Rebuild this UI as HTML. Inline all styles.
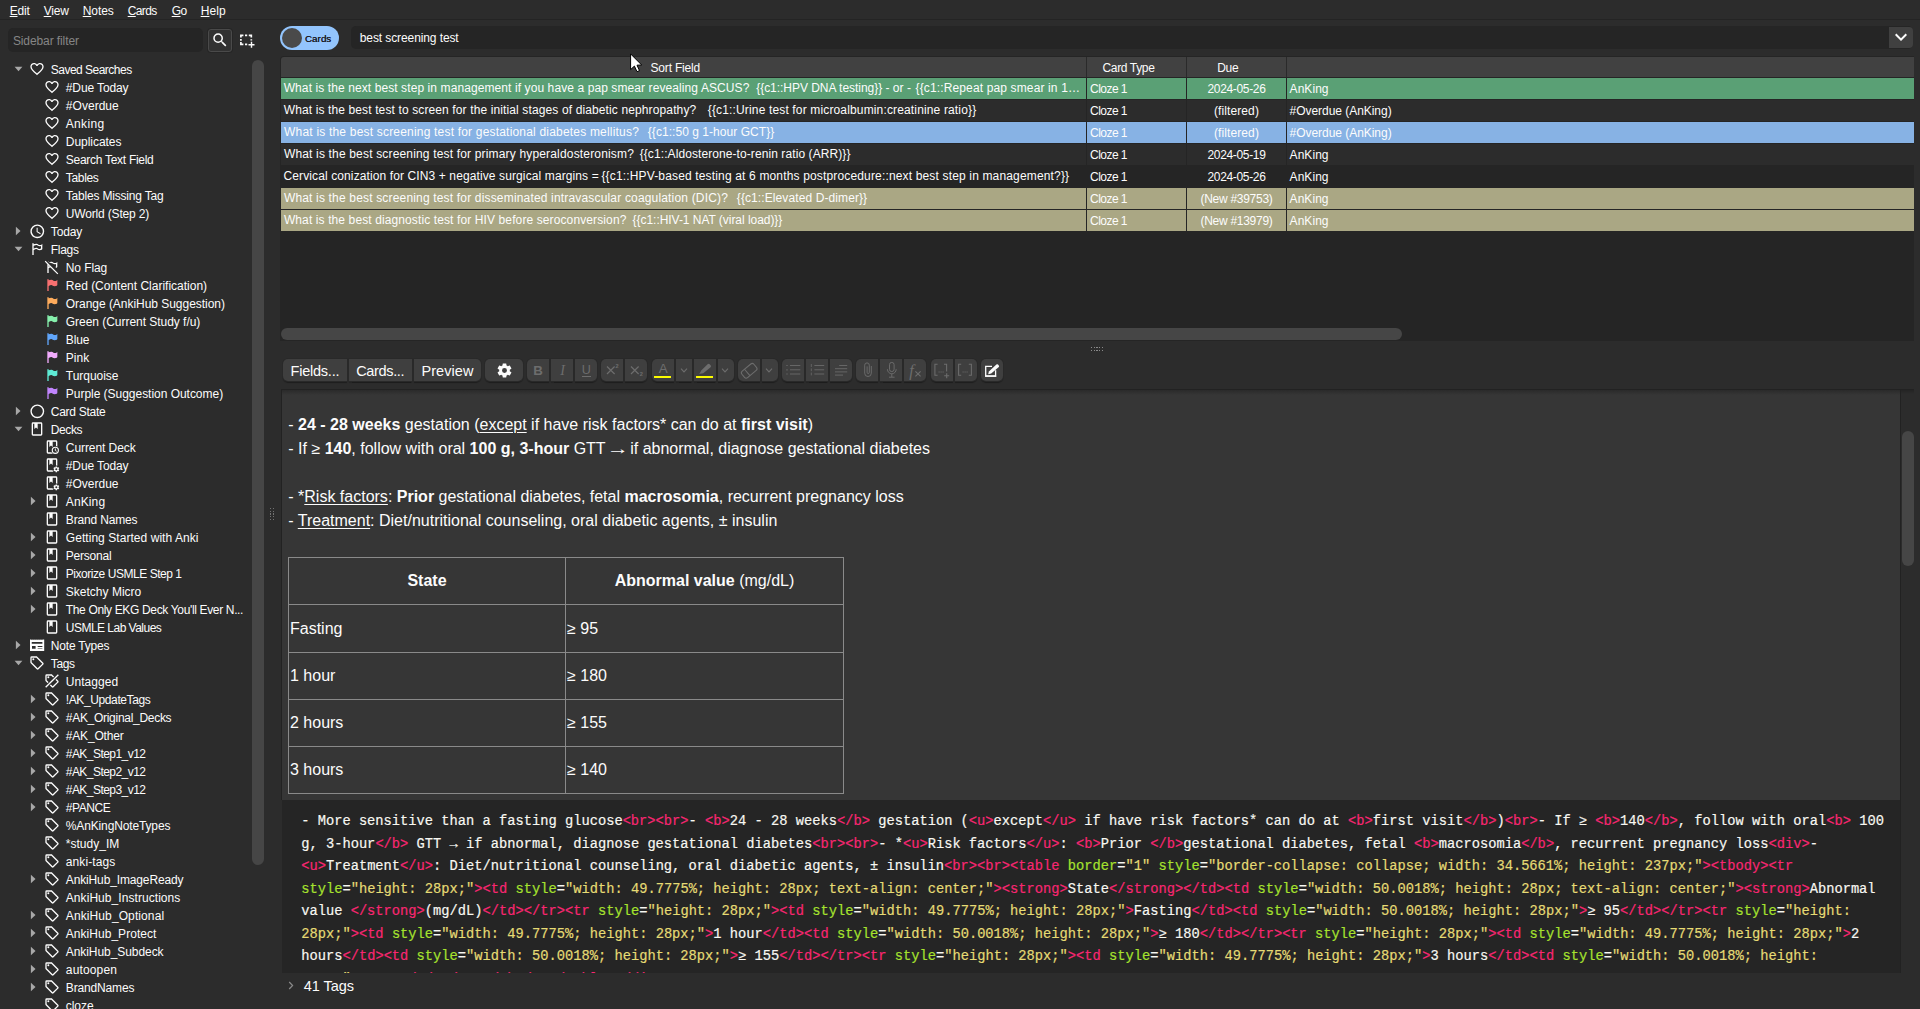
<!DOCTYPE html><html><head><meta charset="utf-8"><title>Browse</title><style>
*{box-sizing:border-box;margin:0;padding:0}
html,body{width:1920px;height:1009px;overflow:hidden;background:#2c2c2c}
body{position:relative;font-family:"Liberation Sans",sans-serif;font-size:12px;color:#fcfcfc}
.abs,.ic,.t{position:absolute}
.t{white-space:nowrap;line-height:18px;height:18px;font-size:12px}
u.m{text-decoration:underline;text-underline-offset:1px}
#menubar{position:absolute;left:0;top:0;width:1920px;height:20px;background:#2c2c2c;border-bottom:1px solid #242424}
#menubar span{position:absolute;top:2px;line-height:16px;font-size:12px}
.arrow-r{position:absolute;width:0;height:0;border-top:4.2px solid transparent;border-bottom:4.2px solid transparent;border-left:4.6px solid #a8a8a8}
.tb{top:359px;height:22px;box-shadow:0 0 0 1px #292929,0 1.5px 1px rgba(0,0,0,.35)}
.tt{top:361px;font-size:15px;letter-spacing:-0.55px}
.rt{font-size:16px;line-height:24px;white-space:nowrap}
.rt u{text-underline-offset:2px}
.gt{border-collapse:collapse;font-size:16px;table-layout:fixed}
.gt td{border:1px solid #8a8a8a;padding:1px 1px}
.cl{position:absolute;left:19.2px;-webkit-text-stroke:0.18px currentColor;white-space:pre;font-family:"Liberation Mono",monospace;font-size:13.745px;line-height:22.5px;height:22.5px;color:#f8f8f2}
.k{color:#f92672}.a{color:#a6e22e}.s{color:#e6db74}
.arrow-d{position:absolute;width:0;height:0;border-left:3.9px solid transparent;border-right:3.9px solid transparent;border-top:4.4px solid #a8a8a8}

</style></head><body>
<div id="menubar">
<div class="t" style="left:9.7px;top:2.3px;font-size:12px;letter-spacing:-0.172px;"><u class="m">E</u>dit</div>
<div class="t" style="left:43.7px;top:2.3px;font-size:12px;letter-spacing:-0.199px;"><u class="m">V</u>iew</div>
<div class="t" style="left:82.7px;top:2.3px;font-size:12px;letter-spacing:-0.072px;"><u class="m">N</u>otes</div>
<div class="t" style="left:127.7px;top:2.3px;font-size:12px;letter-spacing:-0.603px;"><u class="m">C</u>ards</div>
<div class="t" style="left:171.7px;top:2.3px;font-size:12px;letter-spacing:-0.508px;"><u class="m">G</u>o</div>
<div class="t" style="left:200.7px;top:2.3px;font-size:12px;letter-spacing:0.078px;"><u class="m">H</u>elp</div>
</div>
<div class="abs" style="left:8px;top:28px;width:195px;height:24px;background:#252525;border-radius:5px"></div>
<div class="t" style="left:12.9px;top:31.6px;font-size:12px;letter-spacing:-0.098px;color:#858585;">Sidebar filter</div>
<div class="abs" style="left:208px;top:29px;width:24px;height:23px;background:#323232;border:1px solid #4a4a4a;border-radius:3px;box-shadow:0 0 0 1px #262626"></div>
<svg class="ic" style="left:210.8px;top:30.7px" width="18" height="18" viewBox="0 0 24 24"><path fill="#fcfcfc" d="M9.5,3A6.5,6.5 0 0,1 16,9.5C16,11.11 15.41,12.59 14.44,13.73L14.71,14H15.5L20.5,19L19,20.5L14,15.5V14.71L13.73,14.44C12.59,15.41 11.11,16 9.5,16A6.5,6.5 0 0,1 3,9.5A6.5,6.5 0 0,1 9.5,3M9.5,5C7,5 5,7 5,9.5C5,12 7,14 9.5,14C12,14 14,12 14,9.5C14,7 12,5 9.5,5Z"/></svg>
<svg class="ic" style="left:238px;top:31.7px" width="18" height="18" viewBox="0 0 18 18"><path fill="none" stroke="#fcfcfc" stroke-width="1.7" d="M2.9,5.6V3.3H5.4M7,3.3H9.2M10.8,3.3H13.3V5.6M2.9,6.9V8.8M13.3,7.2V8.4M2.9,10.1V12.3H5.4M7,12.3H9.2"/><path fill="none" stroke="#fcfcfc" stroke-width="1.4" d="M13.5,9.7V15.7M10.5,12.7H16.5"/></svg>
<div class="abs" style="left:252px;top:60px;width:12px;height:805px;background:#464646;border-radius:6px"></div>
<svg class="ic" style="left:14px;top:66px" width="10" height="6" viewBox="0 0 10 6"><path fill="#a8a8a8" d="M0.6,0.8H8.4L4.5,5.2Z"/></svg>
<svg class="ic" style="left:29px;top:61px" width="16" height="16" viewBox="0 0 24 24"><path fill="#fcfcfc" d="M12.1,18.55L12,18.65L11.89,18.55C7.14,14.24 4,11.39 4,8.5C4,6.5 5.5,5 7.5,5C9.04,5 10.54,6 11.07,7.36H12.93C13.46,6 14.96,5 16.5,5C18.5,5 20,6.5 20,8.5C20,11.39 16.86,14.24 12.1,18.55M16.5,3C14.76,3 13.09,3.81 12,5.08C10.91,3.81 9.24,3 7.5,3C4.42,3 2,5.41 2,8.5C2,12.27 5.4,15.36 10.55,20.03L12,21.35L13.45,20.03C18.6,15.36 22,12.27 22,8.5C22,5.41 19.58,3 16.5,3Z"/></svg>
<div class="t" style="left:50.8px;top:60.6px;font-size:12px;letter-spacing:-0.515px;">Saved Searches</div>
<svg class="ic" style="left:44px;top:79px" width="16" height="16" viewBox="0 0 24 24"><path fill="#fcfcfc" d="M12.1,18.55L12,18.65L11.89,18.55C7.14,14.24 4,11.39 4,8.5C4,6.5 5.5,5 7.5,5C9.04,5 10.54,6 11.07,7.36H12.93C13.46,6 14.96,5 16.5,5C18.5,5 20,6.5 20,8.5C20,11.39 16.86,14.24 12.1,18.55M16.5,3C14.76,3 13.09,3.81 12,5.08C10.91,3.81 9.24,3 7.5,3C4.42,3 2,5.41 2,8.5C2,12.27 5.4,15.36 10.55,20.03L12,21.35L13.45,20.03C18.6,15.36 22,12.27 22,8.5C22,5.41 19.58,3 16.5,3Z"/></svg>
<div class="t" style="left:65.8px;top:78.6px;font-size:12px;letter-spacing:-0.113px;">#Due Today</div>
<svg class="ic" style="left:44px;top:97px" width="16" height="16" viewBox="0 0 24 24"><path fill="#fcfcfc" d="M12.1,18.55L12,18.65L11.89,18.55C7.14,14.24 4,11.39 4,8.5C4,6.5 5.5,5 7.5,5C9.04,5 10.54,6 11.07,7.36H12.93C13.46,6 14.96,5 16.5,5C18.5,5 20,6.5 20,8.5C20,11.39 16.86,14.24 12.1,18.55M16.5,3C14.76,3 13.09,3.81 12,5.08C10.91,3.81 9.24,3 7.5,3C4.42,3 2,5.41 2,8.5C2,12.27 5.4,15.36 10.55,20.03L12,21.35L13.45,20.03C18.6,15.36 22,12.27 22,8.5C22,5.41 19.58,3 16.5,3Z"/></svg>
<div class="t" style="left:65.8px;top:96.6px;font-size:12px;letter-spacing:0.037px;">#Overdue</div>
<svg class="ic" style="left:44px;top:115px" width="16" height="16" viewBox="0 0 24 24"><path fill="#fcfcfc" d="M12.1,18.55L12,18.65L11.89,18.55C7.14,14.24 4,11.39 4,8.5C4,6.5 5.5,5 7.5,5C9.04,5 10.54,6 11.07,7.36H12.93C13.46,6 14.96,5 16.5,5C18.5,5 20,6.5 20,8.5C20,11.39 16.86,14.24 12.1,18.55M16.5,3C14.76,3 13.09,3.81 12,5.08C10.91,3.81 9.24,3 7.5,3C4.42,3 2,5.41 2,8.5C2,12.27 5.4,15.36 10.55,20.03L12,21.35L13.45,20.03C18.6,15.36 22,12.27 22,8.5C22,5.41 19.58,3 16.5,3Z"/></svg>
<div class="t" style="left:65.8px;top:114.6px;font-size:12px;letter-spacing:0.316px;">Anking</div>
<svg class="ic" style="left:44px;top:133px" width="16" height="16" viewBox="0 0 24 24"><path fill="#fcfcfc" d="M12.1,18.55L12,18.65L11.89,18.55C7.14,14.24 4,11.39 4,8.5C4,6.5 5.5,5 7.5,5C9.04,5 10.54,6 11.07,7.36H12.93C13.46,6 14.96,5 16.5,5C18.5,5 20,6.5 20,8.5C20,11.39 16.86,14.24 12.1,18.55M16.5,3C14.76,3 13.09,3.81 12,5.08C10.91,3.81 9.24,3 7.5,3C4.42,3 2,5.41 2,8.5C2,12.27 5.4,15.36 10.55,20.03L12,21.35L13.45,20.03C18.6,15.36 22,12.27 22,8.5C22,5.41 19.58,3 16.5,3Z"/></svg>
<div class="t" style="left:65.8px;top:132.6px;font-size:12px;letter-spacing:-0.043px;">Duplicates</div>
<svg class="ic" style="left:44px;top:151px" width="16" height="16" viewBox="0 0 24 24"><path fill="#fcfcfc" d="M12.1,18.55L12,18.65L11.89,18.55C7.14,14.24 4,11.39 4,8.5C4,6.5 5.5,5 7.5,5C9.04,5 10.54,6 11.07,7.36H12.93C13.46,6 14.96,5 16.5,5C18.5,5 20,6.5 20,8.5C20,11.39 16.86,14.24 12.1,18.55M16.5,3C14.76,3 13.09,3.81 12,5.08C10.91,3.81 9.24,3 7.5,3C4.42,3 2,5.41 2,8.5C2,12.27 5.4,15.36 10.55,20.03L12,21.35L13.45,20.03C18.6,15.36 22,12.27 22,8.5C22,5.41 19.58,3 16.5,3Z"/></svg>
<div class="t" style="left:65.8px;top:150.6px;font-size:12px;letter-spacing:-0.282px;">Search Text Field</div>
<svg class="ic" style="left:44px;top:169px" width="16" height="16" viewBox="0 0 24 24"><path fill="#fcfcfc" d="M12.1,18.55L12,18.65L11.89,18.55C7.14,14.24 4,11.39 4,8.5C4,6.5 5.5,5 7.5,5C9.04,5 10.54,6 11.07,7.36H12.93C13.46,6 14.96,5 16.5,5C18.5,5 20,6.5 20,8.5C20,11.39 16.86,14.24 12.1,18.55M16.5,3C14.76,3 13.09,3.81 12,5.08C10.91,3.81 9.24,3 7.5,3C4.42,3 2,5.41 2,8.5C2,12.27 5.4,15.36 10.55,20.03L12,21.35L13.45,20.03C18.6,15.36 22,12.27 22,8.5C22,5.41 19.58,3 16.5,3Z"/></svg>
<div class="t" style="left:65.8px;top:168.6px;font-size:12px;letter-spacing:-0.331px;">Tables</div>
<svg class="ic" style="left:44px;top:187px" width="16" height="16" viewBox="0 0 24 24"><path fill="#fcfcfc" d="M12.1,18.55L12,18.65L11.89,18.55C7.14,14.24 4,11.39 4,8.5C4,6.5 5.5,5 7.5,5C9.04,5 10.54,6 11.07,7.36H12.93C13.46,6 14.96,5 16.5,5C18.5,5 20,6.5 20,8.5C20,11.39 16.86,14.24 12.1,18.55M16.5,3C14.76,3 13.09,3.81 12,5.08C10.91,3.81 9.24,3 7.5,3C4.42,3 2,5.41 2,8.5C2,12.27 5.4,15.36 10.55,20.03L12,21.35L13.45,20.03C18.6,15.36 22,12.27 22,8.5C22,5.41 19.58,3 16.5,3Z"/></svg>
<div class="t" style="left:65.8px;top:186.6px;font-size:12px;letter-spacing:-0.193px;">Tables Missing Tag</div>
<svg class="ic" style="left:44px;top:205px" width="16" height="16" viewBox="0 0 24 24"><path fill="#fcfcfc" d="M12.1,18.55L12,18.65L11.89,18.55C7.14,14.24 4,11.39 4,8.5C4,6.5 5.5,5 7.5,5C9.04,5 10.54,6 11.07,7.36H12.93C13.46,6 14.96,5 16.5,5C18.5,5 20,6.5 20,8.5C20,11.39 16.86,14.24 12.1,18.55M16.5,3C14.76,3 13.09,3.81 12,5.08C10.91,3.81 9.24,3 7.5,3C4.42,3 2,5.41 2,8.5C2,12.27 5.4,15.36 10.55,20.03L12,21.35L13.45,20.03C18.6,15.36 22,12.27 22,8.5C22,5.41 19.58,3 16.5,3Z"/></svg>
<div class="t" style="left:65.8px;top:204.6px;font-size:12px;letter-spacing:-0.164px;">UWorld (Step 2)</div>
<svg class="ic" style="left:15px;top:226px" width="6" height="10" viewBox="0 0 6 10"><path fill="#a8a8a8" d="M0.9,0.8V9.2L5.5,5Z"/></svg>
<svg class="ic" style="left:28.7px;top:222.7px" width="16.6" height="16.6" viewBox="0 0 24 24"><path fill="#fcfcfc" d="M12,20A8,8 0 0,0 20,12A8,8 0 0,0 12,4A8,8 0 0,0 4,12A8,8 0 0,0 12,20M12,2A10,10 0 0,1 22,12A10,10 0 0,1 12,22C6.47,22 2,17.5 2,12A10,10 0 0,1 12,2M12.5,7V12.25L17,14.92L16.25,16.15L11,13V7H12.5Z"/></svg>
<div class="t" style="left:50.8px;top:222.6px;font-size:12px;letter-spacing:-0.146px;">Today</div>
<svg class="ic" style="left:14px;top:246px" width="10" height="6" viewBox="0 0 10 6"><path fill="#a8a8a8" d="M0.6,0.8H8.4L4.5,5.2Z"/></svg>
<svg class="ic" style="left:29px;top:241px" width="16" height="16" viewBox="0 0 24 24"><path fill="#fcfcfc" d="M6,3A1,1 0 0,1 7,4V4.88C8.06,4.44 9.5,4 11,4C14,4 14,6 16,6C19,6 20,4 20,4V12C20,12 19,14 16,14C13,14 13,12 11,12C8,12 7,14 7,14V21H5V4A1,1 0 0,1 6,3M7,7.25V11.5C7,11.5 9,10 11,10C13,10 14,12 16,12C18,12 18,11 18,11V7.5C18,7.5 17,8 16,8C14,8 13,6 11,6C9,6 7,7.25 7,7.25Z"/></svg>
<div class="t" style="left:50.8px;top:240.6px;font-size:12px;letter-spacing:-0.309px;">Flags</div>
<svg class="ic" style="left:44px;top:259px" width="16" height="16" viewBox="0 0 24 24"><path fill="#fcfcfc" d="M6,3A1,1 0 0,1 7,4V4.88C8.06,4.44 9.5,4 11,4C14,4 14,6 16,6C19,6 20,4 20,4V12C20,12 19.6,12.8 18.6,13.4L17.1,11.9C18,11.6 18,11 18,11V7.5C18,7.5 17,8 16,8C14.9,8 14.1,7.4 13.3,6.9L10.5,6L7,4.9ZM2.4,2.6L21.4,21.6L20.1,22.9L11.3,14.1C9.9,11.9 8,12.6 7,14V21H5V7.8L1.1,3.9ZM7,9.8V11.5C7,11.5 7.6,11 8.6,10.6Z"/></svg>
<div class="t" style="left:65.8px;top:258.6px;font-size:12px;letter-spacing:-0.090px;">No Flag</div>
<svg class="ic" style="left:44px;top:277px" width="16" height="16" viewBox="0 0 24 24"><path fill="#f87171" d="M6,3A1,1 0 0,1 7,4V4.88C8.06,4.44 9.5,4 11,4C14,4 14,6 16,6C19,6 20,4 20,4V12C20,12 19,14 16,14C13,14 13,12 11,12C8,12 7,14 7,14V21H5V4A1,1 0 0,1 6,3Z"/></svg>
<div class="t" style="left:65.8px;top:276.6px;font-size:12px;letter-spacing:-0.004px;">Red (Content Clarification)</div>
<svg class="ic" style="left:44px;top:295px" width="16" height="16" viewBox="0 0 24 24"><path fill="#fdab5c" d="M6,3A1,1 0 0,1 7,4V4.88C8.06,4.44 9.5,4 11,4C14,4 14,6 16,6C19,6 20,4 20,4V12C20,12 19,14 16,14C13,14 13,12 11,12C8,12 7,14 7,14V21H5V4A1,1 0 0,1 6,3Z"/></svg>
<div class="t" style="left:65.8px;top:294.6px;font-size:12px;letter-spacing:-0.037px;">Orange (AnkiHub Suggestion)</div>
<svg class="ic" style="left:44px;top:313px" width="16" height="16" viewBox="0 0 24 24"><path fill="#86efac" d="M6,3A1,1 0 0,1 7,4V4.88C8.06,4.44 9.5,4 11,4C14,4 14,6 16,6C19,6 20,4 20,4V12C20,12 19,14 16,14C13,14 13,12 11,12C8,12 7,14 7,14V21H5V4A1,1 0 0,1 6,3Z"/></svg>
<div class="t" style="left:65.8px;top:312.6px;font-size:12px;letter-spacing:-0.036px;">Green (Current Study f/u)</div>
<svg class="ic" style="left:44px;top:331px" width="16" height="16" viewBox="0 0 24 24"><path fill="#60a5fa" d="M6,3A1,1 0 0,1 7,4V4.88C8.06,4.44 9.5,4 11,4C14,4 14,6 16,6C19,6 20,4 20,4V12C20,12 19,14 16,14C13,14 13,12 11,12C8,12 7,14 7,14V21H5V4A1,1 0 0,1 6,3Z"/></svg>
<div class="t" style="left:65.8px;top:330.6px;font-size:12px;letter-spacing:-0.133px;">Blue</div>
<svg class="ic" style="left:44px;top:349px" width="16" height="16" viewBox="0 0 24 24"><path fill="#f0abfc" d="M6,3A1,1 0 0,1 7,4V4.88C8.06,4.44 9.5,4 11,4C14,4 14,6 16,6C19,6 20,4 20,4V12C20,12 19,14 16,14C13,14 13,12 11,12C8,12 7,14 7,14V21H5V4A1,1 0 0,1 6,3Z"/></svg>
<div class="t" style="left:65.8px;top:348.6px;font-size:12px;letter-spacing:0.039px;">Pink</div>
<svg class="ic" style="left:44px;top:367px" width="16" height="16" viewBox="0 0 24 24"><path fill="#5eead4" d="M6,3A1,1 0 0,1 7,4V4.88C8.06,4.44 9.5,4 11,4C14,4 14,6 16,6C19,6 20,4 20,4V12C20,12 19,14 16,14C13,14 13,12 11,12C8,12 7,14 7,14V21H5V4A1,1 0 0,1 6,3Z"/></svg>
<div class="t" style="left:65.8px;top:366.6px;font-size:12px;letter-spacing:-0.025px;">Turquoise</div>
<svg class="ic" style="left:44px;top:385px" width="16" height="16" viewBox="0 0 24 24"><path fill="#c084fc" d="M6,3A1,1 0 0,1 7,4V4.88C8.06,4.44 9.5,4 11,4C14,4 14,6 16,6C19,6 20,4 20,4V12C20,12 19,14 16,14C13,14 13,12 11,12C8,12 7,14 7,14V21H5V4A1,1 0 0,1 6,3Z"/></svg>
<div class="t" style="left:65.8px;top:384.6px;font-size:12px;letter-spacing:-0.029px;">Purple (Suggestion Outcome)</div>
<svg class="ic" style="left:15px;top:406px" width="6" height="10" viewBox="0 0 6 10"><path fill="#a8a8a8" d="M0.9,0.8V9.2L5.5,5Z"/></svg>
<svg class="ic" style="left:28.7px;top:402.7px" width="16.6" height="16.6" viewBox="0 0 24 24"><path fill="#fcfcfc" d="M12,20A8,8 0 0,1 4,12A8,8 0 0,1 12,4A8,8 0 0,1 20,12A8,8 0 0,1 12,20M12,2A10,10 0 0,0 2,12A10,10 0 0,0 12,22A10,10 0 0,0 22,12A10,10 0 0,0 12,2Z"/></svg>
<div class="t" style="left:50.8px;top:402.6px;font-size:12px;letter-spacing:-0.267px;">Card State</div>
<svg class="ic" style="left:14px;top:426px" width="10" height="6" viewBox="0 0 10 6"><path fill="#a8a8a8" d="M0.6,0.8H8.4L4.5,5.2Z"/></svg>
<svg class="ic" style="left:29px;top:421px" width="16" height="16" viewBox="0 0 24 24"><path fill="#fcfcfc" d="M18,2A2,2 0 0,1 20,4V20A2,2 0 0,1 18,22H6A2,2 0 0,1 4,20V4A2,2 0 0,1 6,2H18M18,4H13V12L10.5,9.75L8,12V4H6V20H18V4Z"/></svg>
<div class="t" style="left:50.8px;top:420.6px;font-size:12px;letter-spacing:-0.389px;">Decks</div>
<svg class="ic" style="left:44px;top:439px" width="16" height="16" viewBox="0 0 24 24"><path fill="#fcfcfc" d="M18,2A2,2 0 0,1 20,4V20A2,2 0 0,1 18,22H6A2,2 0 0,1 4,20V4A2,2 0 0,1 6,2H18M18,4H13V12L10.5,9.75L8,12V4H6V20H18V4Z"/><circle cx="17" cy="17" r="6.4" fill="#2c2c2c"/><circle cx="17" cy="17" r="4.6" fill="none" stroke="#fcfcfc" stroke-width="1.7"/><path d="M17,14.2V17.3L19,18.4" fill="none" stroke="#fcfcfc" stroke-width="1.4"/></svg>
<div class="t" style="left:65.8px;top:438.6px;font-size:12px;letter-spacing:-0.074px;">Current Deck</div>
<svg class="ic" style="left:44px;top:457px" width="16" height="16" viewBox="0 0 24 24"><path fill="#fcfcfc" d="M18,2A2,2 0 0,1 20,4V20A2,2 0 0,1 18,22H6A2,2 0 0,1 4,20V4A2,2 0 0,1 6,2H18M18,4H13V12L10.5,9.75L8,12V4H6V20H18V4Z"/><circle cx="18.5" cy="18.5" r="5.6" fill="#2c2c2c"/><g transform="translate(13.2,13.2) scale(0.44)"><path fill="#fcfcfc" d="M12,15.5A3.5,3.5 0 0,1 8.5,12A3.5,3.5 0 0,1 12,8.5A3.5,3.5 0 0,1 15.5,12A3.5,3.5 0 0,1 12,15.5M19.43,12.97C19.47,12.65 19.5,12.33 19.5,12C19.5,11.67 19.47,11.34 19.43,11L21.54,9.37C21.73,9.22 21.78,8.95 21.66,8.73L19.66,5.27C19.54,5.05 19.27,4.96 19.05,5.05L16.56,6.05C16.04,5.66 15.5,5.32 14.87,5.07L14.5,2.42C14.46,2.18 14.25,2 14,2H10C9.75,2 9.54,2.18 9.5,2.42L9.13,5.07C8.5,5.32 7.96,5.66 7.44,6.05L4.95,5.05C4.73,4.96 4.46,5.05 4.34,5.27L2.34,8.73C2.21,8.95 2.27,9.22 2.46,9.37L4.57,11C4.53,11.34 4.5,11.67 4.5,12C4.5,12.33 4.53,12.65 4.57,12.97L2.46,14.63C2.27,14.78 2.21,15.05 2.34,15.27L4.34,18.73C4.46,18.95 4.73,19.03 4.95,18.95L7.44,17.94C7.96,18.34 8.5,18.68 9.13,18.93L9.5,21.58C9.54,21.82 9.75,22 10,22H14C14.25,22 14.46,21.82 14.5,21.58L14.87,18.93C15.5,18.67 16.04,18.34 16.56,17.94L19.05,18.95C19.27,19.03 19.54,18.95 19.66,18.73L21.66,15.27C21.78,15.05 21.73,14.78 21.54,14.63L19.43,12.97Z"/></g></svg>
<div class="t" style="left:65.8px;top:456.6px;font-size:12px;letter-spacing:-0.113px;">#Due Today</div>
<svg class="ic" style="left:44px;top:475px" width="16" height="16" viewBox="0 0 24 24"><path fill="#fcfcfc" d="M18,2A2,2 0 0,1 20,4V20A2,2 0 0,1 18,22H6A2,2 0 0,1 4,20V4A2,2 0 0,1 6,2H18M18,4H13V12L10.5,9.75L8,12V4H6V20H18V4Z"/><circle cx="18.5" cy="18.5" r="5.6" fill="#2c2c2c"/><g transform="translate(13.2,13.2) scale(0.44)"><path fill="#fcfcfc" d="M12,15.5A3.5,3.5 0 0,1 8.5,12A3.5,3.5 0 0,1 12,8.5A3.5,3.5 0 0,1 15.5,12A3.5,3.5 0 0,1 12,15.5M19.43,12.97C19.47,12.65 19.5,12.33 19.5,12C19.5,11.67 19.47,11.34 19.43,11L21.54,9.37C21.73,9.22 21.78,8.95 21.66,8.73L19.66,5.27C19.54,5.05 19.27,4.96 19.05,5.05L16.56,6.05C16.04,5.66 15.5,5.32 14.87,5.07L14.5,2.42C14.46,2.18 14.25,2 14,2H10C9.75,2 9.54,2.18 9.5,2.42L9.13,5.07C8.5,5.32 7.96,5.66 7.44,6.05L4.95,5.05C4.73,4.96 4.46,5.05 4.34,5.27L2.34,8.73C2.21,8.95 2.27,9.22 2.46,9.37L4.57,11C4.53,11.34 4.5,11.67 4.5,12C4.5,12.33 4.53,12.65 4.57,12.97L2.46,14.63C2.27,14.78 2.21,15.05 2.34,15.27L4.34,18.73C4.46,18.95 4.73,19.03 4.95,18.95L7.44,17.94C7.96,18.34 8.5,18.68 9.13,18.93L9.5,21.58C9.54,21.82 9.75,22 10,22H14C14.25,22 14.46,21.82 14.5,21.58L14.87,18.93C15.5,18.67 16.04,18.34 16.56,17.94L19.05,18.95C19.27,19.03 19.54,18.95 19.66,18.73L21.66,15.27C21.78,15.05 21.73,14.78 21.54,14.63L19.43,12.97Z"/></g></svg>
<div class="t" style="left:65.8px;top:474.6px;font-size:12px;letter-spacing:-0.000px;">#Overdue</div>
<svg class="ic" style="left:30px;top:496px" width="6" height="10" viewBox="0 0 6 10"><path fill="#a8a8a8" d="M0.9,0.8V9.2L5.5,5Z"/></svg>
<svg class="ic" style="left:44px;top:493px" width="16" height="16" viewBox="0 0 24 24"><path fill="#fcfcfc" d="M18,2A2,2 0 0,1 20,4V20A2,2 0 0,1 18,22H6A2,2 0 0,1 4,20V4A2,2 0 0,1 6,2H18M18,4H13V12L10.5,9.75L8,12V4H6V20H18V4Z"/></svg>
<div class="t" style="left:65.8px;top:492.6px;font-size:12px;letter-spacing:0.116px;">AnKing</div>
<svg class="ic" style="left:44px;top:511px" width="16" height="16" viewBox="0 0 24 24"><path fill="#fcfcfc" d="M18,2A2,2 0 0,1 20,4V20A2,2 0 0,1 18,22H6A2,2 0 0,1 4,20V4A2,2 0 0,1 6,2H18M18,4H13V12L10.5,9.75L8,12V4H6V20H18V4Z"/></svg>
<div class="t" style="left:65.8px;top:510.6px;font-size:12px;letter-spacing:-0.161px;">Brand Names</div>
<svg class="ic" style="left:30px;top:532px" width="6" height="10" viewBox="0 0 6 10"><path fill="#a8a8a8" d="M0.9,0.8V9.2L5.5,5Z"/></svg>
<svg class="ic" style="left:44px;top:529px" width="16" height="16" viewBox="0 0 24 24"><path fill="#fcfcfc" d="M18,2A2,2 0 0,1 20,4V20A2,2 0 0,1 18,22H6A2,2 0 0,1 4,20V4A2,2 0 0,1 6,2H18M18,4H13V12L10.5,9.75L8,12V4H6V20H18V4Z"/></svg>
<div class="t" style="left:65.8px;top:528.6px;font-size:12px;letter-spacing:0.052px;">Getting Started with Anki</div>
<svg class="ic" style="left:30px;top:550px" width="6" height="10" viewBox="0 0 6 10"><path fill="#a8a8a8" d="M0.9,0.8V9.2L5.5,5Z"/></svg>
<svg class="ic" style="left:44px;top:547px" width="16" height="16" viewBox="0 0 24 24"><path fill="#fcfcfc" d="M18,2A2,2 0 0,1 20,4V20A2,2 0 0,1 18,22H6A2,2 0 0,1 4,20V4A2,2 0 0,1 6,2H18M18,4H13V12L10.5,9.75L8,12V4H6V20H18V4Z"/></svg>
<div class="t" style="left:65.8px;top:546.6px;font-size:12px;letter-spacing:-0.222px;">Personal</div>
<svg class="ic" style="left:30px;top:568px" width="6" height="10" viewBox="0 0 6 10"><path fill="#a8a8a8" d="M0.9,0.8V9.2L5.5,5Z"/></svg>
<svg class="ic" style="left:44px;top:565px" width="16" height="16" viewBox="0 0 24 24"><path fill="#fcfcfc" d="M18,2A2,2 0 0,1 20,4V20A2,2 0 0,1 18,22H6A2,2 0 0,1 4,20V4A2,2 0 0,1 6,2H18M18,4H13V12L10.5,9.75L8,12V4H6V20H18V4Z"/></svg>
<div class="t" style="left:65.8px;top:564.6px;font-size:12px;letter-spacing:-0.457px;">Pixorize USMLE Step 1</div>
<svg class="ic" style="left:30px;top:586px" width="6" height="10" viewBox="0 0 6 10"><path fill="#a8a8a8" d="M0.9,0.8V9.2L5.5,5Z"/></svg>
<svg class="ic" style="left:44px;top:583px" width="16" height="16" viewBox="0 0 24 24"><path fill="#fcfcfc" d="M18,2A2,2 0 0,1 20,4V20A2,2 0 0,1 18,22H6A2,2 0 0,1 4,20V4A2,2 0 0,1 6,2H18M18,4H13V12L10.5,9.75L8,12V4H6V20H18V4Z"/></svg>
<div class="t" style="left:65.8px;top:582.6px;font-size:12px;letter-spacing:0.011px;">Sketchy Micro</div>
<svg class="ic" style="left:30px;top:604px" width="6" height="10" viewBox="0 0 6 10"><path fill="#a8a8a8" d="M0.9,0.8V9.2L5.5,5Z"/></svg>
<svg class="ic" style="left:44px;top:601px" width="16" height="16" viewBox="0 0 24 24"><path fill="#fcfcfc" d="M18,2A2,2 0 0,1 20,4V20A2,2 0 0,1 18,22H6A2,2 0 0,1 4,20V4A2,2 0 0,1 6,2H18M18,4H13V12L10.5,9.75L8,12V4H6V20H18V4Z"/></svg>
<div class="t" style="left:65.8px;top:600.6px;font-size:12px;letter-spacing:-0.345px;">The Only EKG Deck You'll Ever N...</div>
<svg class="ic" style="left:44px;top:619px" width="16" height="16" viewBox="0 0 24 24"><path fill="#fcfcfc" d="M18,2A2,2 0 0,1 20,4V20A2,2 0 0,1 18,22H6A2,2 0 0,1 4,20V4A2,2 0 0,1 6,2H18M18,4H13V12L10.5,9.75L8,12V4H6V20H18V4Z"/></svg>
<div class="t" style="left:65.8px;top:618.6px;font-size:12px;letter-spacing:-0.521px;">USMLE Lab Values</div>
<svg class="ic" style="left:15px;top:640px" width="6" height="10" viewBox="0 0 6 10"><path fill="#a8a8a8" d="M0.9,0.8V9.2L5.5,5Z"/></svg>
<svg class="ic" style="left:29px;top:637px" width="16" height="16" viewBox="0 0 24 24"><path fill="#fcfcfc" fill-rule="evenodd" d="M1.5,3.6H22.8V21H1.5ZM4.1,7.6V10H20.1V7.6ZM4.5,13.6V17.7H9.9V13.6ZM13,13.6V15.1H20.1V13.6ZM13,16.7V17.8H20.1V16.7Z"/><path stroke="#2c2c2c" stroke-width="1.1" d="M4.4,2.6V4.6M7.4,2.6V4.6M10.4,2.6V4.6M13.4,2.6V4.6M16.4,2.6V4.6M19.4,2.6V4.6"/></svg>
<div class="t" style="left:50.8px;top:636.6px;font-size:12px;letter-spacing:-0.198px;">Note Types</div>
<svg class="ic" style="left:14px;top:660px" width="10" height="6" viewBox="0 0 10 6"><path fill="#a8a8a8" d="M0.6,0.8H8.4L4.5,5.2Z"/></svg>
<svg class="ic" style="left:29px;top:655px" width="16" height="16" viewBox="0 0 24 24"><path fill="#fcfcfc" d="M21.41,11.58L12.41,2.58C12.04,2.21 11.53,2 11,2H4A2,2 0 0,0 2,4V11C2,11.53 2.21,12.04 2.59,12.41L11.58,21.41C11.95,21.78 12.47,22 13,22C13.53,22 14.04,21.79 14.41,21.41L21.41,14.41C21.79,14.04 22,13.53 22,13C22,12.47 21.79,11.95 21.41,11.58M13,20L4,11V4H11L20,13M6.5,5A1.5,1.5 0 0,1 8,6.5A1.5,1.5 0 0,1 6.5,8A1.5,1.5 0 0,1 5,6.5A1.5,1.5 0 0,1 6.5,5Z"/></svg>
<div class="t" style="left:50.8px;top:654.6px;font-size:12px;letter-spacing:-0.415px;">Tags</div>
<svg class="ic" style="left:44px;top:673px" width="16" height="16" viewBox="0 0 24 24"><path fill="#fcfcfc" d="M21.41,11.58L12.41,2.58C12.04,2.21 11.53,2 11,2H4A2,2 0 0,0 2,4V11C2,11.53 2.21,12.04 2.59,12.41L11.58,21.41C11.95,21.78 12.47,22 13,22C13.53,22 14.04,21.79 14.41,21.41L21.41,14.41C21.79,14.04 22,13.53 22,13C22,12.47 21.79,11.95 21.41,11.58M13,20L4,11V4H11L20,13M6.5,5A1.5,1.5 0 0,1 8,6.5A1.5,1.5 0 0,1 6.5,8A1.5,1.5 0 0,1 5,6.5A1.5,1.5 0 0,1 6.5,5Z"/><path d="M2,22L22,2" stroke="#2c2c2c" stroke-width="5"/><path d="M2.5,21.5L21.5,2.5" stroke="#fcfcfc" stroke-width="2"/></svg>
<div class="t" style="left:65.8px;top:672.6px;font-size:12px;letter-spacing:0.044px;">Untagged</div>
<svg class="ic" style="left:30px;top:694px" width="6" height="10" viewBox="0 0 6 10"><path fill="#a8a8a8" d="M0.9,0.8V9.2L5.5,5Z"/></svg>
<svg class="ic" style="left:44px;top:691px" width="16" height="16" viewBox="0 0 24 24"><path fill="#fcfcfc" d="M21.41,11.58L12.41,2.58C12.04,2.21 11.53,2 11,2H4A2,2 0 0,0 2,4V11C2,11.53 2.21,12.04 2.59,12.41L11.58,21.41C11.95,21.78 12.47,22 13,22C13.53,22 14.04,21.79 14.41,21.41L21.41,14.41C21.79,14.04 22,13.53 22,13C22,12.47 21.79,11.95 21.41,11.58M13,20L4,11V4H11L20,13M6.5,5A1.5,1.5 0 0,1 8,6.5A1.5,1.5 0 0,1 6.5,8A1.5,1.5 0 0,1 5,6.5A1.5,1.5 0 0,1 6.5,5Z"/></svg>
<div class="t" style="left:65.8px;top:690.6px;font-size:12px;letter-spacing:-0.390px;">!AK_UpdateTags</div>
<svg class="ic" style="left:30px;top:712px" width="6" height="10" viewBox="0 0 6 10"><path fill="#a8a8a8" d="M0.9,0.8V9.2L5.5,5Z"/></svg>
<svg class="ic" style="left:44px;top:709px" width="16" height="16" viewBox="0 0 24 24"><path fill="#fcfcfc" d="M21.41,11.58L12.41,2.58C12.04,2.21 11.53,2 11,2H4A2,2 0 0,0 2,4V11C2,11.53 2.21,12.04 2.59,12.41L11.58,21.41C11.95,21.78 12.47,22 13,22C13.53,22 14.04,21.79 14.41,21.41L21.41,14.41C21.79,14.04 22,13.53 22,13C22,12.47 21.79,11.95 21.41,11.58M13,20L4,11V4H11L20,13M6.5,5A1.5,1.5 0 0,1 8,6.5A1.5,1.5 0 0,1 6.5,8A1.5,1.5 0 0,1 5,6.5A1.5,1.5 0 0,1 6.5,5Z"/></svg>
<div class="t" style="left:65.8px;top:708.6px;font-size:12px;letter-spacing:-0.290px;">#AK_Original_Decks</div>
<svg class="ic" style="left:30px;top:730px" width="6" height="10" viewBox="0 0 6 10"><path fill="#a8a8a8" d="M0.9,0.8V9.2L5.5,5Z"/></svg>
<svg class="ic" style="left:44px;top:727px" width="16" height="16" viewBox="0 0 24 24"><path fill="#fcfcfc" d="M21.41,11.58L12.41,2.58C12.04,2.21 11.53,2 11,2H4A2,2 0 0,0 2,4V11C2,11.53 2.21,12.04 2.59,12.41L11.58,21.41C11.95,21.78 12.47,22 13,22C13.53,22 14.04,21.79 14.41,21.41L21.41,14.41C21.79,14.04 22,13.53 22,13C22,12.47 21.79,11.95 21.41,11.58M13,20L4,11V4H11L20,13M6.5,5A1.5,1.5 0 0,1 8,6.5A1.5,1.5 0 0,1 6.5,8A1.5,1.5 0 0,1 5,6.5A1.5,1.5 0 0,1 6.5,5Z"/></svg>
<div class="t" style="left:65.8px;top:726.6px;font-size:12px;letter-spacing:-0.186px;">#AK_Other</div>
<svg class="ic" style="left:30px;top:748px" width="6" height="10" viewBox="0 0 6 10"><path fill="#a8a8a8" d="M0.9,0.8V9.2L5.5,5Z"/></svg>
<svg class="ic" style="left:44px;top:745px" width="16" height="16" viewBox="0 0 24 24"><path fill="#fcfcfc" d="M21.41,11.58L12.41,2.58C12.04,2.21 11.53,2 11,2H4A2,2 0 0,0 2,4V11C2,11.53 2.21,12.04 2.59,12.41L11.58,21.41C11.95,21.78 12.47,22 13,22C13.53,22 14.04,21.79 14.41,21.41L21.41,14.41C21.79,14.04 22,13.53 22,13C22,12.47 21.79,11.95 21.41,11.58M13,20L4,11V4H11L20,13M6.5,5A1.5,1.5 0 0,1 8,6.5A1.5,1.5 0 0,1 6.5,8A1.5,1.5 0 0,1 5,6.5A1.5,1.5 0 0,1 6.5,5Z"/></svg>
<div class="t" style="left:65.8px;top:744.6px;font-size:12px;letter-spacing:-0.550px;">#AK_Step1_v12</div>
<svg class="ic" style="left:30px;top:766px" width="6" height="10" viewBox="0 0 6 10"><path fill="#a8a8a8" d="M0.9,0.8V9.2L5.5,5Z"/></svg>
<svg class="ic" style="left:44px;top:763px" width="16" height="16" viewBox="0 0 24 24"><path fill="#fcfcfc" d="M21.41,11.58L12.41,2.58C12.04,2.21 11.53,2 11,2H4A2,2 0 0,0 2,4V11C2,11.53 2.21,12.04 2.59,12.41L11.58,21.41C11.95,21.78 12.47,22 13,22C13.53,22 14.04,21.79 14.41,21.41L21.41,14.41C21.79,14.04 22,13.53 22,13C22,12.47 21.79,11.95 21.41,11.58M13,20L4,11V4H11L20,13M6.5,5A1.5,1.5 0 0,1 8,6.5A1.5,1.5 0 0,1 6.5,8A1.5,1.5 0 0,1 5,6.5A1.5,1.5 0 0,1 6.5,5Z"/></svg>
<div class="t" style="left:65.8px;top:762.6px;font-size:12px;letter-spacing:-0.550px;">#AK_Step2_v12</div>
<svg class="ic" style="left:30px;top:784px" width="6" height="10" viewBox="0 0 6 10"><path fill="#a8a8a8" d="M0.9,0.8V9.2L5.5,5Z"/></svg>
<svg class="ic" style="left:44px;top:781px" width="16" height="16" viewBox="0 0 24 24"><path fill="#fcfcfc" d="M21.41,11.58L12.41,2.58C12.04,2.21 11.53,2 11,2H4A2,2 0 0,0 2,4V11C2,11.53 2.21,12.04 2.59,12.41L11.58,21.41C11.95,21.78 12.47,22 13,22C13.53,22 14.04,21.79 14.41,21.41L21.41,14.41C21.79,14.04 22,13.53 22,13C22,12.47 21.79,11.95 21.41,11.58M13,20L4,11V4H11L20,13M6.5,5A1.5,1.5 0 0,1 8,6.5A1.5,1.5 0 0,1 6.5,8A1.5,1.5 0 0,1 5,6.5A1.5,1.5 0 0,1 6.5,5Z"/></svg>
<div class="t" style="left:65.8px;top:780.6px;font-size:12px;letter-spacing:-0.550px;">#AK_Step3_v12</div>
<svg class="ic" style="left:30px;top:802px" width="6" height="10" viewBox="0 0 6 10"><path fill="#a8a8a8" d="M0.9,0.8V9.2L5.5,5Z"/></svg>
<svg class="ic" style="left:44px;top:799px" width="16" height="16" viewBox="0 0 24 24"><path fill="#fcfcfc" d="M21.41,11.58L12.41,2.58C12.04,2.21 11.53,2 11,2H4A2,2 0 0,0 2,4V11C2,11.53 2.21,12.04 2.59,12.41L11.58,21.41C11.95,21.78 12.47,22 13,22C13.53,22 14.04,21.79 14.41,21.41L21.41,14.41C21.79,14.04 22,13.53 22,13C22,12.47 21.79,11.95 21.41,11.58M13,20L4,11V4H11L20,13M6.5,5A1.5,1.5 0 0,1 8,6.5A1.5,1.5 0 0,1 6.5,8A1.5,1.5 0 0,1 5,6.5A1.5,1.5 0 0,1 6.5,5Z"/></svg>
<div class="t" style="left:65.8px;top:798.6px;font-size:12px;letter-spacing:-0.440px;">#PANCE</div>
<svg class="ic" style="left:44px;top:817px" width="16" height="16" viewBox="0 0 24 24"><path fill="#fcfcfc" d="M21.41,11.58L12.41,2.58C12.04,2.21 11.53,2 11,2H4A2,2 0 0,0 2,4V11C2,11.53 2.21,12.04 2.59,12.41L11.58,21.41C11.95,21.78 12.47,22 13,22C13.53,22 14.04,21.79 14.41,21.41L21.41,14.41C21.79,14.04 22,13.53 22,13C22,12.47 21.79,11.95 21.41,11.58M13,20L4,11V4H11L20,13M6.5,5A1.5,1.5 0 0,1 8,6.5A1.5,1.5 0 0,1 6.5,8A1.5,1.5 0 0,1 5,6.5A1.5,1.5 0 0,1 6.5,5Z"/></svg>
<div class="t" style="left:65.8px;top:816.6px;font-size:12px;letter-spacing:-0.140px;">%AnKingNoteTypes</div>
<svg class="ic" style="left:44px;top:835px" width="16" height="16" viewBox="0 0 24 24"><path fill="#fcfcfc" d="M21.41,11.58L12.41,2.58C12.04,2.21 11.53,2 11,2H4A2,2 0 0,0 2,4V11C2,11.53 2.21,12.04 2.59,12.41L11.58,21.41C11.95,21.78 12.47,22 13,22C13.53,22 14.04,21.79 14.41,21.41L21.41,14.41C21.79,14.04 22,13.53 22,13C22,12.47 21.79,11.95 21.41,11.58M13,20L4,11V4H11L20,13M6.5,5A1.5,1.5 0 0,1 8,6.5A1.5,1.5 0 0,1 6.5,8A1.5,1.5 0 0,1 5,6.5A1.5,1.5 0 0,1 6.5,5Z"/></svg>
<div class="t" style="left:65.8px;top:834.6px;font-size:12px;letter-spacing:0.016px;">*study_IM</div>
<svg class="ic" style="left:44px;top:853px" width="16" height="16" viewBox="0 0 24 24"><path fill="#fcfcfc" d="M21.41,11.58L12.41,2.58C12.04,2.21 11.53,2 11,2H4A2,2 0 0,0 2,4V11C2,11.53 2.21,12.04 2.59,12.41L11.58,21.41C11.95,21.78 12.47,22 13,22C13.53,22 14.04,21.79 14.41,21.41L21.41,14.41C21.79,14.04 22,13.53 22,13C22,12.47 21.79,11.95 21.41,11.58M13,20L4,11V4H11L20,13M6.5,5A1.5,1.5 0 0,1 8,6.5A1.5,1.5 0 0,1 6.5,8A1.5,1.5 0 0,1 5,6.5A1.5,1.5 0 0,1 6.5,5Z"/></svg>
<div class="t" style="left:65.8px;top:852.6px;font-size:12px;letter-spacing:0.089px;">anki-tags</div>
<svg class="ic" style="left:30px;top:874px" width="6" height="10" viewBox="0 0 6 10"><path fill="#a8a8a8" d="M0.9,0.8V9.2L5.5,5Z"/></svg>
<svg class="ic" style="left:44px;top:871px" width="16" height="16" viewBox="0 0 24 24"><path fill="#fcfcfc" d="M21.41,11.58L12.41,2.58C12.04,2.21 11.53,2 11,2H4A2,2 0 0,0 2,4V11C2,11.53 2.21,12.04 2.59,12.41L11.58,21.41C11.95,21.78 12.47,22 13,22C13.53,22 14.04,21.79 14.41,21.41L21.41,14.41C21.79,14.04 22,13.53 22,13C22,12.47 21.79,11.95 21.41,11.58M13,20L4,11V4H11L20,13M6.5,5A1.5,1.5 0 0,1 8,6.5A1.5,1.5 0 0,1 6.5,8A1.5,1.5 0 0,1 5,6.5A1.5,1.5 0 0,1 6.5,5Z"/></svg>
<div class="t" style="left:65.8px;top:870.6px;font-size:12px;letter-spacing:-0.138px;">AnkiHub_ImageReady</div>
<svg class="ic" style="left:44px;top:889px" width="16" height="16" viewBox="0 0 24 24"><path fill="#fcfcfc" d="M21.41,11.58L12.41,2.58C12.04,2.21 11.53,2 11,2H4A2,2 0 0,0 2,4V11C2,11.53 2.21,12.04 2.59,12.41L11.58,21.41C11.95,21.78 12.47,22 13,22C13.53,22 14.04,21.79 14.41,21.41L21.41,14.41C21.79,14.04 22,13.53 22,13C22,12.47 21.79,11.95 21.41,11.58M13,20L4,11V4H11L20,13M6.5,5A1.5,1.5 0 0,1 8,6.5A1.5,1.5 0 0,1 6.5,8A1.5,1.5 0 0,1 5,6.5A1.5,1.5 0 0,1 6.5,5Z"/></svg>
<div class="t" style="left:65.8px;top:888.6px;font-size:12px;letter-spacing:0.060px;">AnkiHub_Instructions</div>
<svg class="ic" style="left:30px;top:910px" width="6" height="10" viewBox="0 0 6 10"><path fill="#a8a8a8" d="M0.9,0.8V9.2L5.5,5Z"/></svg>
<svg class="ic" style="left:44px;top:907px" width="16" height="16" viewBox="0 0 24 24"><path fill="#fcfcfc" d="M21.41,11.58L12.41,2.58C12.04,2.21 11.53,2 11,2H4A2,2 0 0,0 2,4V11C2,11.53 2.21,12.04 2.59,12.41L11.58,21.41C11.95,21.78 12.47,22 13,22C13.53,22 14.04,21.79 14.41,21.41L21.41,14.41C21.79,14.04 22,13.53 22,13C22,12.47 21.79,11.95 21.41,11.58M13,20L4,11V4H11L20,13M6.5,5A1.5,1.5 0 0,1 8,6.5A1.5,1.5 0 0,1 6.5,8A1.5,1.5 0 0,1 5,6.5A1.5,1.5 0 0,1 6.5,5Z"/></svg>
<div class="t" style="left:65.8px;top:906.6px;font-size:12px;letter-spacing:0.104px;">AnkiHub_Optional</div>
<svg class="ic" style="left:30px;top:928px" width="6" height="10" viewBox="0 0 6 10"><path fill="#a8a8a8" d="M0.9,0.8V9.2L5.5,5Z"/></svg>
<svg class="ic" style="left:44px;top:925px" width="16" height="16" viewBox="0 0 24 24"><path fill="#fcfcfc" d="M21.41,11.58L12.41,2.58C12.04,2.21 11.53,2 11,2H4A2,2 0 0,0 2,4V11C2,11.53 2.21,12.04 2.59,12.41L11.58,21.41C11.95,21.78 12.47,22 13,22C13.53,22 14.04,21.79 14.41,21.41L21.41,14.41C21.79,14.04 22,13.53 22,13C22,12.47 21.79,11.95 21.41,11.58M13,20L4,11V4H11L20,13M6.5,5A1.5,1.5 0 0,1 8,6.5A1.5,1.5 0 0,1 6.5,8A1.5,1.5 0 0,1 5,6.5A1.5,1.5 0 0,1 6.5,5Z"/></svg>
<div class="t" style="left:65.8px;top:924.6px;font-size:12px;letter-spacing:0.037px;">AnkiHub_Protect</div>
<svg class="ic" style="left:30px;top:946px" width="6" height="10" viewBox="0 0 6 10"><path fill="#a8a8a8" d="M0.9,0.8V9.2L5.5,5Z"/></svg>
<svg class="ic" style="left:44px;top:943px" width="16" height="16" viewBox="0 0 24 24"><path fill="#fcfcfc" d="M21.41,11.58L12.41,2.58C12.04,2.21 11.53,2 11,2H4A2,2 0 0,0 2,4V11C2,11.53 2.21,12.04 2.59,12.41L11.58,21.41C11.95,21.78 12.47,22 13,22C13.53,22 14.04,21.79 14.41,21.41L21.41,14.41C21.79,14.04 22,13.53 22,13C22,12.47 21.79,11.95 21.41,11.58M13,20L4,11V4H11L20,13M6.5,5A1.5,1.5 0 0,1 8,6.5A1.5,1.5 0 0,1 6.5,8A1.5,1.5 0 0,1 5,6.5A1.5,1.5 0 0,1 6.5,5Z"/></svg>
<div class="t" style="left:65.8px;top:942.6px;font-size:12px;letter-spacing:-0.069px;">AnkiHub_Subdeck</div>
<svg class="ic" style="left:30px;top:964px" width="6" height="10" viewBox="0 0 6 10"><path fill="#a8a8a8" d="M0.9,0.8V9.2L5.5,5Z"/></svg>
<svg class="ic" style="left:44px;top:961px" width="16" height="16" viewBox="0 0 24 24"><path fill="#fcfcfc" d="M21.41,11.58L12.41,2.58C12.04,2.21 11.53,2 11,2H4A2,2 0 0,0 2,4V11C2,11.53 2.21,12.04 2.59,12.41L11.58,21.41C11.95,21.78 12.47,22 13,22C13.53,22 14.04,21.79 14.41,21.41L21.41,14.41C21.79,14.04 22,13.53 22,13C22,12.47 21.79,11.95 21.41,11.58M13,20L4,11V4H11L20,13M6.5,5A1.5,1.5 0 0,1 8,6.5A1.5,1.5 0 0,1 6.5,8A1.5,1.5 0 0,1 5,6.5A1.5,1.5 0 0,1 6.5,5Z"/></svg>
<div class="t" style="left:65.8px;top:960.6px;font-size:12px;letter-spacing:0.155px;">autoopen</div>
<svg class="ic" style="left:30px;top:982px" width="6" height="10" viewBox="0 0 6 10"><path fill="#a8a8a8" d="M0.9,0.8V9.2L5.5,5Z"/></svg>
<svg class="ic" style="left:44px;top:979px" width="16" height="16" viewBox="0 0 24 24"><path fill="#fcfcfc" d="M21.41,11.58L12.41,2.58C12.04,2.21 11.53,2 11,2H4A2,2 0 0,0 2,4V11C2,11.53 2.21,12.04 2.59,12.41L11.58,21.41C11.95,21.78 12.47,22 13,22C13.53,22 14.04,21.79 14.41,21.41L21.41,14.41C21.79,14.04 22,13.53 22,13C22,12.47 21.79,11.95 21.41,11.58M13,20L4,11V4H11L20,13M6.5,5A1.5,1.5 0 0,1 8,6.5A1.5,1.5 0 0,1 6.5,8A1.5,1.5 0 0,1 5,6.5A1.5,1.5 0 0,1 6.5,5Z"/></svg>
<div class="t" style="left:65.8px;top:978.6px;font-size:12px;letter-spacing:-0.153px;">BrandNames</div>
<svg class="ic" style="left:44px;top:997px" width="16" height="16" viewBox="0 0 24 24"><path fill="#fcfcfc" d="M21.41,11.58L12.41,2.58C12.04,2.21 11.53,2 11,2H4A2,2 0 0,0 2,4V11C2,11.53 2.21,12.04 2.59,12.41L11.58,21.41C11.95,21.78 12.47,22 13,22C13.53,22 14.04,21.79 14.41,21.41L21.41,14.41C21.79,14.04 22,13.53 22,13C22,12.47 21.79,11.95 21.41,11.58M13,20L4,11V4H11L20,13M6.5,5A1.5,1.5 0 0,1 8,6.5A1.5,1.5 0 0,1 6.5,8A1.5,1.5 0 0,1 5,6.5A1.5,1.5 0 0,1 6.5,5Z"/></svg>
<div class="t" style="left:65.8px;top:996.6px;font-size:12px;letter-spacing:-0.063px;">cloze</div>
<svg class="ic" style="left:270px;top:508px" width="4" height="12" viewBox="0 0 4 12" shape-rendering="crispEdges"><rect x="0" y="0" width="1" height="1" fill="#727272"/><rect x="0" y="3" width="1" height="1" fill="#727272"/><rect x="0" y="5" width="1" height="2" fill="#727272"/><rect x="0" y="8" width="1" height="1" fill="#727272"/><rect x="0" y="11" width="1" height="1" fill="#727272"/><rect x="3" y="0" width="1" height="1" fill="#727272"/><rect x="3" y="3" width="1" height="1" fill="#727272"/><rect x="3" y="5" width="1" height="2" fill="#727272"/><rect x="3" y="8" width="1" height="1" fill="#727272"/><rect x="3" y="11" width="1" height="1" fill="#727272"/></svg>
<div class="abs" style="left:280px;top:26px;width:59px;height:24px;background:#93c5fd;border-radius:12px"></div>
<div class="abs" style="left:282px;top:28px;width:20px;height:20px;background:#4a4a4a;border-radius:10px"></div>
<div class="t" style="left:305.0px;top:29.8px;font-size:9.9px;letter-spacing:-0.009px;color:#1c1c26;text-shadow:0 0 0.4px #1c1c26;">Cards</div>
<div class="abs" style="left:351px;top:26px;width:1562px;height:23px;background:#252525;border-radius:5px"></div>
<div class="t" style="left:359.8px;top:28.8px;font-size:12px;letter-spacing:-0.102px;">best screening test</div>
<div class="abs" style="left:1889px;top:27px;width:24px;height:21px;background:#404040;border-radius:0 4px 4px 0"></div>
<svg class="ic" style="left:1889px;top:25.3px" width="24" height="24" viewBox="0 0 24 24"><path fill="#fcfcfc" d="M7.41,8.58L12,13.17L16.59,8.58L18,10L12,16L6,10L7.41,8.58Z"/></svg>
<div class="abs" style="left:280px;top:56px;width:1634px;height:285px;background:#252525;border-radius:4px 0 0 0"></div>
<div class="abs" style="left:281px;top:57px;width:1633px;height:20px;background:#414141;border-radius:3px 0 0 0"></div>
<div class="abs" style="left:1086px;top:57px;width:1px;height:20px;background:#2a2a2a"></div>
<div class="abs" style="left:1186px;top:57px;width:1px;height:20px;background:#2a2a2a"></div>
<div class="abs" style="left:1286px;top:57px;width:1px;height:20px;background:#2a2a2a"></div>
<div class="t" style="left:650.5px;top:59px;font-size:12px;letter-spacing:-0.176px;">Sort Field</div>
<div class="t" style="left:1102.5px;top:59px;font-size:12px;letter-spacing:-0.351px;">Card Type</div>
<div class="t" style="left:1217.3px;top:59px;font-size:12px;letter-spacing:-0.339px;">Due</div>
<div class="abs" style="left:281px;top:78px;width:805px;height:21px;background:#5aa075"></div>
<div class="abs" style="left:1087px;top:78px;width:99px;height:21px;background:#5aa075"></div>
<div class="abs" style="left:1187px;top:78px;width:99px;height:21px;background:#5aa075"></div>
<div class="abs" style="left:1287px;top:78px;width:627px;height:21px;background:#5aa075"></div>
<div class="t" style="left:283.7px;top:79px;font-size:12px;letter-spacing:0.093px;color:#fcfcfc;white-space:pre;">What is the next best step in management if you have a pap smear revealing ASCUS?</div>
<div class="t" style="left:756.2px;top:79px;font-size:12px;letter-spacing:-0.033px;color:#fcfcfc;white-space:pre;">{{c1::HPV DNA testing}}</div>
<div class="t" style="left:885.5px;top:79px;font-size:12px;letter-spacing:0.009px;color:#fcfcfc;white-space:pre;">- or -</div>
<div class="t" style="left:915.5px;top:79px;font-size:12px;letter-spacing:0.137px;color:#fcfcfc;white-space:pre;">{{c1::Repeat pap smear in 1…</div>
<div class="t" style="left:1090px;top:80px;font-size:12px;letter-spacing:-0.527px;color:#fcfcfc;">Cloze 1</div>
<div class="t" style="left:1207.5px;top:80px;font-size:12px;letter-spacing:-0.339px;color:#fcfcfc;">2024-05-26</div>
<div class="t" style="left:1289.6px;top:80px;font-size:12px;letter-spacing:0.049px;color:#fcfcfc;">AnKing</div>
<div class="abs" style="left:281px;top:100px;width:805px;height:21px;background:#2c2c2c"></div>
<div class="abs" style="left:1087px;top:100px;width:99px;height:21px;background:#2c2c2c"></div>
<div class="abs" style="left:1187px;top:100px;width:99px;height:21px;background:#2c2c2c"></div>
<div class="abs" style="left:1287px;top:100px;width:627px;height:21px;background:#2c2c2c"></div>
<div class="t" style="left:283.7px;top:101px;font-size:12px;letter-spacing:0.123px;color:#fcfcfc;white-space:pre;">What is the best test to screen for the initial stages of diabetic nephropathy?</div>
<div class="t" style="left:707.8px;top:101px;font-size:12px;letter-spacing:0.148px;color:#fcfcfc;white-space:pre;">{{c1::Urine test for microalbumin:creatinine ratio}}</div>
<div class="t" style="left:1090px;top:102px;font-size:12px;letter-spacing:-0.527px;color:#fcfcfc;">Cloze 1</div>
<div class="t" style="left:1214.0px;top:102px;font-size:12px;letter-spacing:0.098px;color:#fcfcfc;">(filtered)</div>
<div class="t" style="left:1289.6px;top:102px;font-size:12px;letter-spacing:-0.043px;color:#fcfcfc;">#Overdue (AnKing)</div>
<div class="abs" style="left:281px;top:122px;width:805px;height:21px;background:#87b2e4"></div>
<div class="abs" style="left:1087px;top:122px;width:99px;height:21px;background:#87b2e4"></div>
<div class="abs" style="left:1187px;top:122px;width:99px;height:21px;background:#87b2e4"></div>
<div class="abs" style="left:1287px;top:122px;width:627px;height:21px;background:#87b2e4"></div>
<div class="t" style="left:284.09999999999997px;top:123px;font-size:12px;letter-spacing:0.193px;color:#fcfcfc;white-space:pre;">What is the best screening test for gestational diabetes mellitus?</div>
<div class="t" style="left:647.8px;top:123px;font-size:12px;letter-spacing:0.045px;color:#fcfcfc;white-space:pre;">{{c1::50 g 1-hour GCT}}</div>
<div class="t" style="left:1090px;top:124px;font-size:12px;letter-spacing:-0.527px;color:#fcfcfc;">Cloze 1</div>
<div class="t" style="left:1214.0px;top:124px;font-size:12px;letter-spacing:0.098px;color:#fcfcfc;">(filtered)</div>
<div class="t" style="left:1289.6px;top:124px;font-size:12px;letter-spacing:-0.043px;color:#fcfcfc;">#Overdue (AnKing)</div>
<div class="abs" style="left:281px;top:144px;width:805px;height:21px;background:#2c2c2c"></div>
<div class="abs" style="left:1087px;top:144px;width:99px;height:21px;background:#2c2c2c"></div>
<div class="abs" style="left:1187px;top:144px;width:99px;height:21px;background:#2c2c2c"></div>
<div class="abs" style="left:1287px;top:144px;width:627px;height:21px;background:#2c2c2c"></div>
<div class="t" style="left:283.9px;top:145px;font-size:12px;letter-spacing:0.169px;color:#fcfcfc;white-space:pre;">What is the best screening test for primary hyperaldosteronism?</div>
<div class="t" style="left:639.7px;top:145px;font-size:12px;letter-spacing:0.084px;color:#fcfcfc;white-space:pre;">{{c1::Aldosterone-to-renin ratio (ARR)}}</div>
<div class="t" style="left:1090px;top:146px;font-size:12px;letter-spacing:-0.527px;color:#fcfcfc;">Cloze 1</div>
<div class="t" style="left:1207.5px;top:146px;font-size:12px;letter-spacing:-0.339px;color:#fcfcfc;">2024-05-19</div>
<div class="t" style="left:1289.6px;top:146px;font-size:12px;letter-spacing:0.049px;color:#fcfcfc;">AnKing</div>
<div class="abs" style="left:281px;top:166px;width:805px;height:21px;background:#252525"></div>
<div class="abs" style="left:1087px;top:166px;width:99px;height:21px;background:#252525"></div>
<div class="abs" style="left:1187px;top:166px;width:99px;height:21px;background:#252525"></div>
<div class="abs" style="left:1287px;top:166px;width:627px;height:21px;background:#252525"></div>
<div class="t" style="left:283.5px;top:167px;font-size:12px;letter-spacing:0.112px;color:#fcfcfc;white-space:pre;">Cervical conization for CIN3 + negative surgical margins =</div>
<div class="t" style="left:601.4px;top:167px;font-size:12px;letter-spacing:0.157px;color:#fcfcfc;white-space:pre;">{{c1::HPV-based testing at 6 months postprocedure::next best step in management?}}</div>
<div class="t" style="left:1090px;top:168px;font-size:12px;letter-spacing:-0.527px;color:#fcfcfc;">Cloze 1</div>
<div class="t" style="left:1207.5px;top:168px;font-size:12px;letter-spacing:-0.339px;color:#fcfcfc;">2024-05-26</div>
<div class="t" style="left:1289.6px;top:168px;font-size:12px;letter-spacing:0.049px;color:#fcfcfc;">AnKing</div>
<div class="abs" style="left:281px;top:188px;width:805px;height:21px;background:#aaa784"></div>
<div class="abs" style="left:1087px;top:188px;width:99px;height:21px;background:#aaa784"></div>
<div class="abs" style="left:1187px;top:188px;width:99px;height:21px;background:#aaa784"></div>
<div class="abs" style="left:1287px;top:188px;width:627px;height:21px;background:#aaa784"></div>
<div class="t" style="left:283.9px;top:189px;font-size:12px;letter-spacing:0.172px;color:#fcfcfc;white-space:pre;">What is the best screening test for disseminated intravascular coagulation (DIC)?</div>
<div class="t" style="left:736.8px;top:189px;font-size:12px;letter-spacing:0.097px;color:#fcfcfc;white-space:pre;">{{c1::Elevated D-dimer}}</div>
<div class="t" style="left:1090px;top:190px;font-size:12px;letter-spacing:-0.527px;color:#fcfcfc;">Cloze 1</div>
<div class="t" style="left:1200.5px;top:190px;font-size:12px;letter-spacing:-0.281px;color:#fcfcfc;">(New #39753)</div>
<div class="t" style="left:1289.6px;top:190px;font-size:12px;letter-spacing:0.049px;color:#fcfcfc;">AnKing</div>
<div class="abs" style="left:281px;top:210px;width:805px;height:21px;background:#aaa784"></div>
<div class="abs" style="left:1087px;top:210px;width:99px;height:21px;background:#aaa784"></div>
<div class="abs" style="left:1187px;top:210px;width:99px;height:21px;background:#aaa784"></div>
<div class="abs" style="left:1287px;top:210px;width:627px;height:21px;background:#aaa784"></div>
<div class="t" style="left:283.9px;top:211px;font-size:12px;letter-spacing:0.112px;color:#fcfcfc;white-space:pre;">What is the best diagnostic test for HIV before seroconversion?</div>
<div class="t" style="left:632.6px;top:211px;font-size:12px;letter-spacing:-0.042px;color:#fcfcfc;white-space:pre;">{{c1::HIV-1 NAT (viral load)}}</div>
<div class="t" style="left:1090px;top:212px;font-size:12px;letter-spacing:-0.527px;color:#fcfcfc;">Cloze 1</div>
<div class="t" style="left:1200.5px;top:212px;font-size:12px;letter-spacing:-0.281px;color:#fcfcfc;">(New #13979)</div>
<div class="t" style="left:1289.6px;top:212px;font-size:12px;letter-spacing:0.049px;color:#fcfcfc;">AnKing</div>
<div class="abs" style="left:281px;top:328px;width:1121px;height:12px;background:#464646;border-radius:6px"></div>
<svg class="ic" style="left:1091px;top:347px" width="12" height="4" viewBox="0 0 12 4" shape-rendering="crispEdges"><rect x="0" y="0" width="1" height="1" fill="#8a8a8a"/><rect x="3" y="0" width="1" height="1" fill="#8a8a8a"/><rect x="5" y="0" width="2" height="1" fill="#8a8a8a"/><rect x="8" y="0" width="1" height="1" fill="#8a8a8a"/><rect x="11" y="0" width="1" height="1" fill="#8a8a8a"/><rect x="0" y="3" width="1" height="1" fill="#8a8a8a"/><rect x="3" y="3" width="1" height="1" fill="#8a8a8a"/><rect x="5" y="3" width="2" height="1" fill="#8a8a8a"/><rect x="8" y="3" width="1" height="1" fill="#8a8a8a"/><rect x="11" y="3" width="1" height="1" fill="#8a8a8a"/></svg>
<div class="abs tb" style="left:283px;width:64px;border-radius:5px 0px 0px 5px;background:#3f3f3f"></div>
<div class="abs tb" style="left:349px;width:63px;border-radius:0px 0px 0px 0px;background:#3f3f3f"></div>
<div class="abs tb" style="left:414px;width:67px;border-radius:0px 5px 5px 0px;background:#3f3f3f"></div>
<div class="abs tb" style="left:485px;width:38px;border-radius:5px 5px 5px 5px;background:#3f3f3f"></div>
<div class="abs tb" style="left:527px;width:22px;border-radius:5px 0px 0px 5px;background:#3f3f3f"></div>
<div class="abs tb" style="left:551px;width:22px;border-radius:0px 0px 0px 0px;background:#3f3f3f"></div>
<div class="abs tb" style="left:575px;width:22px;border-radius:0px 5px 5px 0px;background:#3f3f3f"></div>
<div class="abs tb" style="left:601px;width:22px;border-radius:5px 0px 0px 5px;background:#3f3f3f"></div>
<div class="abs tb" style="left:625px;width:22px;border-radius:0px 5px 5px 0px;background:#3f3f3f"></div>
<div class="abs tb" style="left:652px;width:22px;border-radius:5px 0px 0px 5px;background:#3f3f3f"></div>
<div class="abs tb" style="left:676px;width:16px;border-radius:0px 0px 0px 0px;background:#3f3f3f"></div>
<div class="abs tb" style="left:694px;width:22px;border-radius:0px 0px 0px 0px;background:#3f3f3f"></div>
<div class="abs tb" style="left:718px;width:16px;border-radius:0px 5px 5px 0px;background:#3f3f3f"></div>
<div class="abs tb" style="left:738px;width:22px;border-radius:5px 0px 0px 5px;background:#3f3f3f"></div>
<div class="abs tb" style="left:762px;width:16px;border-radius:0px 5px 5px 0px;background:#3f3f3f"></div>
<div class="abs tb" style="left:782px;width:22px;border-radius:5px 0px 0px 5px;background:#3f3f3f"></div>
<div class="abs tb" style="left:806px;width:22px;border-radius:0px 0px 0px 0px;background:#3f3f3f"></div>
<div class="abs tb" style="left:830px;width:22px;border-radius:0px 5px 5px 0px;background:#3f3f3f"></div>
<div class="abs tb" style="left:856px;width:22px;border-radius:5px 0px 0px 5px;background:#3f3f3f"></div>
<div class="abs tb" style="left:880px;width:22px;border-radius:0px 0px 0px 0px;background:#3f3f3f"></div>
<div class="abs tb" style="left:904px;width:22px;border-radius:0px 5px 5px 0px;background:#3f3f3f"></div>
<div class="abs tb" style="left:931px;width:22px;border-radius:5px 0px 0px 5px;background:#3f3f3f"></div>
<div class="abs tb" style="left:955px;width:22px;border-radius:0px 5px 5px 0px;background:#3f3f3f"></div>
<div class="abs tb" style="left:981px;width:22px;border-radius:5px 5px 5px 5px;background:#3f3f3f"></div>
<div class="t" style="left:290.5px;top:362px;font-size:14.5px;letter-spacing:-0.218px;">Fields...</div>
<div class="t" style="left:356.2px;top:362px;font-size:14.5px;letter-spacing:-0.346px;">Cards...</div>
<div class="t" style="left:421.5px;top:362px;font-size:14.5px;letter-spacing:0.060px;">Preview</div>
<svg class="ic" style="left:495.5px;top:362px" width="17" height="17" viewBox="0 0 24 24"><path fill="#fcfcfc" d="M12,15.5A3.5,3.5 0 0,1 8.5,12A3.5,3.5 0 0,1 12,8.5A3.5,3.5 0 0,1 15.5,12A3.5,3.5 0 0,1 12,15.5M19.43,12.97C19.47,12.65 19.5,12.33 19.5,12C19.5,11.67 19.47,11.34 19.43,11L21.54,9.37C21.73,9.22 21.78,8.95 21.66,8.73L19.66,5.27C19.54,5.05 19.27,4.96 19.05,5.05L16.56,6.05C16.04,5.66 15.5,5.32 14.87,5.07L14.5,2.42C14.46,2.18 14.25,2 14,2H10C9.75,2 9.54,2.18 9.5,2.42L9.13,5.07C8.5,5.32 7.96,5.66 7.44,6.05L4.95,5.05C4.73,4.96 4.46,5.05 4.34,5.27L2.34,8.73C2.21,8.95 2.27,9.22 2.46,9.37L4.57,11C4.53,11.34 4.5,11.67 4.5,12C4.5,12.33 4.53,12.65 4.57,12.97L2.46,14.63C2.27,14.78 2.21,15.05 2.34,15.27L4.34,18.73C4.46,18.95 4.73,19.03 4.95,18.95L7.44,17.94C7.96,18.34 8.5,18.68 9.13,18.93L9.5,21.58C9.54,21.82 9.75,22 10,22H14C14.25,22 14.46,21.82 14.5,21.58L14.87,18.93C15.5,18.67 16.04,18.34 16.56,17.94L19.05,18.95C19.27,19.03 19.54,18.95 19.66,18.73L21.66,15.27C21.78,15.05 21.73,14.78 21.54,14.63L19.43,12.97Z"/></svg>
<div class="t" style="left:527px;top:361.5px;width:22px;text-align:center;font-weight:bold;font-size:13.3px;color:#6d6d6d">B</div>
<div class="t" style="left:551.5px;top:361.5px;width:22px;text-align:center;font-style:italic;font-size:14px;color:#6d6d6d;font-family:'Liberation Serif',serif">I</div>
<div class="t" style="left:575.2px;top:361px;width:22px;text-align:center;font-size:12.6px;color:#6d6d6d">U</div>
<div class="abs" style="left:581.7px;top:376.2px;width:9.3px;height:1px;background:#6d6d6d"></div>
<svg class="ic" style="left:601px;top:359px" width="22" height="22" viewBox="0 0 22 22"><path d="M6,7.5L13.6,15M13.6,7.5L6,15" stroke="#6d6d6d" stroke-width="1.2" fill="none"/></svg>
<div class="t" style="left:615.6px;top:358.79999999999995px;font-size:5.6px;font-weight:bold;color:#6d6d6d;line-height:14px;height:14px">2</div>
<svg class="ic" style="left:625.2px;top:359px" width="22" height="22" viewBox="0 0 22 22"><path d="M6,7.5L13.6,15M13.6,7.5L6,15" stroke="#6d6d6d" stroke-width="1.2" fill="none"/></svg>
<div class="t" style="left:639.8000000000001px;top:367.29999999999995px;font-size:5.6px;font-weight:bold;color:#6d6d6d;line-height:14px;height:14px">2</div>
<div class="t" style="left:652.3px;top:359.7px;width:22px;text-align:center;font-size:13.4px;color:#6d6d6d">A</div>
<div class="abs" style="left:653.8px;top:375.6px;width:17px;height:2.5px;background:#fbfb00"></div>
<div class="abs" style="left:695.8px;top:375.6px;width:17px;height:2.5px;background:#fbfb00"></div>
<svg class="ic" style="left:679.8px;top:367px" width="8" height="7" viewBox="0 0 8 7"><path d="M1,1.7L4,4.9L7,1.7" fill="none" stroke="#6d6d6d" stroke-width="1.1"/></svg>
<svg class="ic" style="left:721.4px;top:367px" width="8" height="7" viewBox="0 0 8 7"><path d="M1,1.7L4,4.9L7,1.7" fill="none" stroke="#6d6d6d" stroke-width="1.1"/></svg>
<svg class="ic" style="left:765.4px;top:367px" width="8" height="7" viewBox="0 0 8 7"><path d="M1,1.7L4,4.9L7,1.7" fill="none" stroke="#6d6d6d" stroke-width="1.1"/></svg>
<svg class="ic" style="left:694px;top:359px" width="22" height="22" viewBox="0 0 22 22"><path fill="#6d6d6d" d="M13.6,5.2Q14.6,4.2 15.6,5.2L16.6,6.2Q17.6,7.2 16.6,8.2L9.3,14.2L6.2,14.8L5.2,14.9L5.9,13.9L7.2,11.6Z"/></svg>
<svg class="ic" style="left:738px;top:359px" width="22" height="22" viewBox="0 0 22 22"><g fill="none" stroke="#6d6d6d" stroke-width="1.05" transform="rotate(-40 11.2 11.8)"><rect x="3.4" y="7.6" width="15.6" height="8.4" rx="2.2"/><path d="M8.6,7.6V16"/></g></svg>
<svg class="ic" style="left:782px;top:359px" width="22" height="22" viewBox="0 0 22 22"><path stroke="#6b6b6b" stroke-width="0.9" d="M8,6.5H18.3M8,10.8H18.3M8,15H18.3"/><path stroke="#6b6b6b" stroke-width="1.2" d="M4.4,6.5H5.6M4.4,10.8H5.6M4.4,15H5.6"/></svg>
<svg class="ic" style="left:806px;top:359px" width="22" height="22" viewBox="0 0 22 22"><path stroke="#6b6b6b" stroke-width="0.9" d="M8.4,6.5H18.2M8.4,10.8H18.2M8.4,15H18.2"/><path stroke="#6b6b6b" stroke-width="0.8" d="M5.3,5V8M5.3,9.4V12.2M5.3,13.6V16.4"/></svg>
<svg class="ic" style="left:830px;top:359px" width="22" height="22" viewBox="0 0 22 22"><path stroke="#6b6b6b" stroke-width="0.9" d="M9.2,6.5H17.2M5,9.7H17.2M5,12.9H17.2M5,16.1H13"/></svg>
<svg class="ic" style="left:856px;top:359px" width="22" height="22" viewBox="0 0 22 22"><path fill="none" stroke="#6d6d6d" stroke-width="0.95" d="M15.3,7V14.2a3.3,3.3 0 0 1 -6.6,0V6.2a2.3,2.3 0 0 1 4.6,0V13.4a1.1,1.1 0 0 1 -2.2,0V7.4"/></svg>
<svg class="ic" style="left:880px;top:359px" width="22" height="22" viewBox="0 0 22 22"><rect x="9.5" y="3.4" width="4.6" height="9.2" rx="2.3" fill="none" stroke="#6d6d6d" stroke-width="0.95"/><path fill="none" stroke="#6d6d6d" stroke-width="0.95" d="M7.4,10.2A4.4,4.6 0 0,0 16.2,10.2M11.8,14.9V18M9,18.2H14.6"/></svg>
<div class="t" style="left:909.3px;top:361.5px;font-style:italic;font-size:16px;color:#6d6d6d;font-family:'Liberation Serif',serif">f</div>
<svg class="ic" style="left:904px;top:359px" width="22" height="22" viewBox="0 0 22 22"><path d="M11.4,12.4L16.6,17.4M16.6,12.4L11.4,17.4" stroke="#6d6d6d" stroke-width="1.1"/></svg>
<svg class="ic" style="left:931px;top:359px" width="22" height="22" viewBox="0 0 22 22"><path fill="none" stroke="#6d6d6d" stroke-width="1.05" d="M6.6,5.3H3.9V16.3H6.6M13,5.3H15.6V12.6"/><path stroke="#6d6d6d" stroke-width="1" stroke-dasharray="1 1" d="M7.6,13H13"/><path stroke="#6d6d6d" stroke-width="1.1" d="M15.7,14.2V19.2M13.2,16.7H18.2"/></svg>
<svg class="ic" style="left:955px;top:359px" width="22" height="22" viewBox="0 0 22 22"><path fill="none" stroke="#6d6d6d" stroke-width="1.05" d="M6.2,5.3H3.6V16.3H6.2M13.8,5.3H16.4V16.3H13.8"/><path stroke="#6d6d6d" stroke-width="1" stroke-dasharray="1 1" d="M7.6,13H13"/></svg>
<svg class="ic" style="left:981px;top:359px" width="22" height="22" viewBox="0 0 22 22"><path fill="none" stroke="#fcfcfc" stroke-width="1.3" d="M11,7.4H4.7V17H14.6V11.2"/><path stroke="#fcfcfc" stroke-width="1.2" d="M4.1,17.2H15.2"/><path fill="#fcfcfc" d="M7.2,15.2L7.9,12.6L15.4,5.6Q16.2,4.9 17,5.6L17.8,6.4Q18.5,7.2 17.8,8L10.2,14.6Z"/></svg>
<div class="abs" style="left:281px;top:389px;width:1633px;height:1px;background:#222"></div>
<div class="abs" style="left:281px;top:390px;width:1619px;height:410px;background:#363636;border-left:1px solid #222"></div>
<div class="abs" style="left:282px;top:390px;width:1618px;height:5px;background:linear-gradient(#2a2a2a,#363636)"></div>
<div class="abs" style="left:1900px;top:390px;width:1px;height:583px;background:#222"></div>
<div class="abs" style="left:1901px;top:390px;width:13px;height:4px;background:linear-gradient(#242424,#2c2c2c)"></div>
<div class="abs" style="left:1902px;top:431px;width:12px;height:135px;background:#464646;border-radius:6px"></div>
<div class="abs rt" style="left:288.3px;top:413px;width:1600px">
<div>- <b>24 - 28 weeks</b> gestation (<u>except</u> if have risk factors* can do at <b>first visit</b>)</div>
<div>- If &ge; <b>140</b>, follow with oral <b>100 g, 3-hour</b> GTT <span style="display:inline-block;transform:scaleX(1.4)">&rarr;</span> if abnormal, diagnose gestational diabetes</div>
<div>&nbsp;</div>
<div>- *<u>Risk factors</u>: <b>Prior</b> gestational diabetes, fetal <b>macrosomia</b>, recurrent pregnancy loss</div>
<div>- <u>Treatment</u>: Diet/nutritional counseling, oral diabetic agents, &plusmn; insulin</div>
</div>
<table class="abs gt" style="left:288px;top:557px;width:556px;height:237px">
<tr style="height:47px"><td style="width:277px;text-align:center"><b>State</b></td><td style="text-align:center"><b>Abnormal value</b> (mg/dL)</td></tr>
<tr style="height:48px"><td>Fasting</td><td>&ge; 95</td></tr>
<tr style="height:47px"><td>1 hour</td><td>&ge; 180</td></tr>
<tr style="height:47px"><td>2 hours</td><td>&ge; 155</td></tr>
<tr style="height:47px"><td>3 hours</td><td>&ge; 140</td></tr>
</table>
<div class="abs" style="left:282px;top:800px;width:1618px;height:173px;background:#252525;overflow:hidden">
<div class="cl" style="top:11.1px">- More sensitive than a fasting glucose<span class="k">&lt;br</span><span class="k">&gt;</span><span class="k">&lt;br</span><span class="k">&gt;</span>- <span class="k">&lt;b</span><span class="k">&gt;</span>24 - 28 weeks<span class="k">&lt;/b</span><span class="k">&gt;</span> gestation (<span class="k">&lt;u</span><span class="k">&gt;</span>except<span class="k">&lt;/u</span><span class="k">&gt;</span> if have risk factors* can do at <span class="k">&lt;b</span><span class="k">&gt;</span>first visit<span class="k">&lt;/b</span><span class="k">&gt;</span>)<span class="k">&lt;br</span><span class="k">&gt;</span>- If ≥ <span class="k">&lt;b</span><span class="k">&gt;</span>140<span class="k">&lt;/b</span><span class="k">&gt;</span>, follow with oral<span class="k">&lt;b</span><span class="k">&gt;</span> 100</div>
<div class="cl" style="top:33.6px">g, 3-hour<span class="k">&lt;/b</span><span class="k">&gt;</span> GTT → if abnormal, diagnose gestational diabetes<span class="k">&lt;br</span><span class="k">&gt;</span><span class="k">&lt;br</span><span class="k">&gt;</span>- *<span class="k">&lt;u</span><span class="k">&gt;</span>Risk factors<span class="k">&lt;/u</span><span class="k">&gt;</span>: <span class="k">&lt;b</span><span class="k">&gt;</span>Prior <span class="k">&lt;/b</span><span class="k">&gt;</span>gestational diabetes, fetal <span class="k">&lt;b</span><span class="k">&gt;</span>macrosomia<span class="k">&lt;/b</span><span class="k">&gt;</span>, recurrent pregnancy loss<span class="k">&lt;div</span><span class="k">&gt;</span>-</div>
<div class="cl" style="top:56.1px"><span class="k">&lt;u</span><span class="k">&gt;</span>Treatment<span class="k">&lt;/u</span><span class="k">&gt;</span>: Diet/nutritional counseling, oral diabetic agents, ± insulin<span class="k">&lt;br</span><span class="k">&gt;</span><span class="k">&lt;br</span><span class="k">&gt;</span><span class="k">&lt;table</span> <span class="a">border</span>=<span class="s">"1"</span> <span class="a">style</span>=<span class="s">"border-collapse: collapse; width: 34.5661%; height: 237px;"</span><span class="k">&gt;</span><span class="k">&lt;tbody</span><span class="k">&gt;</span><span class="k">&lt;tr</span></div>
<div class="cl" style="top:78.6px"><span class="a">style</span>=<span class="s">"height: 28px;"</span><span class="k">&gt;</span><span class="k">&lt;td</span> <span class="a">style</span>=<span class="s">"width: 49.7775%; height: 28px; text-align: center;"</span><span class="k">&gt;</span><span class="k">&lt;strong</span><span class="k">&gt;</span>State<span class="k">&lt;/strong</span><span class="k">&gt;</span><span class="k">&lt;/td</span><span class="k">&gt;</span><span class="k">&lt;td</span> <span class="a">style</span>=<span class="s">"width: 50.0018%; height: 28px; text-align: center;"</span><span class="k">&gt;</span><span class="k">&lt;strong</span><span class="k">&gt;</span>Abnormal</div>
<div class="cl" style="top:101.1px">value <span class="k">&lt;/strong</span><span class="k">&gt;</span>(mg/dL)<span class="k">&lt;/td</span><span class="k">&gt;</span><span class="k">&lt;/tr</span><span class="k">&gt;</span><span class="k">&lt;tr</span> <span class="a">style</span>=<span class="s">"height: 28px;"</span><span class="k">&gt;</span><span class="k">&lt;td</span> <span class="a">style</span>=<span class="s">"width: 49.7775%; height: 28px;"</span><span class="k">&gt;</span>Fasting<span class="k">&lt;/td</span><span class="k">&gt;</span><span class="k">&lt;td</span> <span class="a">style</span>=<span class="s">"width: 50.0018%; height: 28px;"</span><span class="k">&gt;</span>≥ 95<span class="k">&lt;/td</span><span class="k">&gt;</span><span class="k">&lt;/tr</span><span class="k">&gt;</span><span class="k">&lt;tr</span> <span class="a">style</span>=<span class="s">"height:</span></div>
<div class="cl" style="top:123.6px"><span class="s">28px;"</span><span class="k">&gt;</span><span class="k">&lt;td</span> <span class="a">style</span>=<span class="s">"width: 49.7775%; height: 28px;"</span><span class="k">&gt;</span>1 hour<span class="k">&lt;/td</span><span class="k">&gt;</span><span class="k">&lt;td</span> <span class="a">style</span>=<span class="s">"width: 50.0018%; height: 28px;"</span><span class="k">&gt;</span>≥ 180<span class="k">&lt;/td</span><span class="k">&gt;</span><span class="k">&lt;/tr</span><span class="k">&gt;</span><span class="k">&lt;tr</span> <span class="a">style</span>=<span class="s">"height: 28px;"</span><span class="k">&gt;</span><span class="k">&lt;td</span> <span class="a">style</span>=<span class="s">"width: 49.7775%; height: 28px;"</span><span class="k">&gt;</span>2</div>
<div class="cl" style="top:146.1px">hours<span class="k">&lt;/td</span><span class="k">&gt;</span><span class="k">&lt;td</span> <span class="a">style</span>=<span class="s">"width: 50.0018%; height: 28px;"</span><span class="k">&gt;</span>≥ 155<span class="k">&lt;/td</span><span class="k">&gt;</span><span class="k">&lt;/tr</span><span class="k">&gt;</span><span class="k">&lt;tr</span> <span class="a">style</span>=<span class="s">"height: 28px;"</span><span class="k">&gt;</span><span class="k">&lt;td</span> <span class="a">style</span>=<span class="s">"width: 49.7775%; height: 28px;"</span><span class="k">&gt;</span>3 hours<span class="k">&lt;/td</span><span class="k">&gt;</span><span class="k">&lt;td</span> <span class="a">style</span>=<span class="s">"width: 50.0018%; height:</span></div>
<div class="cl" style="top:168.6px"><span class="s">28px;"</span><span class="k">&gt;</span>≥ 140<span class="k">&lt;/td</span><span class="k">&gt;</span><span class="k">&lt;/tr</span><span class="k">&gt;</span><span class="k">&lt;/tbody</span><span class="k">&gt;</span><span class="k">&lt;/table</span><span class="k">&gt;</span><span class="k">&lt;/div</span><span class="k">&gt;</span></div>
</div>
<svg class="ic" style="left:288px;top:981px" width="6" height="9" viewBox="0 0 6 9"><path d="M1.2,1L4.6,4.5L1.2,8" fill="none" stroke="#8a8a8a" stroke-width="1.2"/></svg>
<div class="t" style="left:303.7px;top:976.8px;font-size:14.5px;letter-spacing:-0.033px;">41 Tags</div>
<svg class="ic" style="left:630px;top:53px" width="14" height="21" viewBox="0 0 14 21"><path fill="#fff" stroke="#000" stroke-width="1" stroke-linejoin="miter" d="M0.6,0.9V16.6L4.4,13.1L7,18.7L9.5,17.6L7,12.2L11.7,12Z"/></svg>
</body></html>
